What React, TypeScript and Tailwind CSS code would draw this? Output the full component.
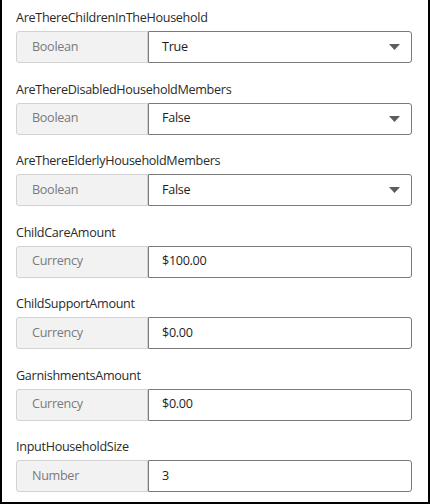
import React from 'react';

interface Field {
    label: string;
    type: string;
    value: string;
    select?: boolean;
}

const fields: Field[] = [
    { label: 'AreThereChildrenInTheHousehold', type: 'Boolean', value: 'True', select: true },
    { label: 'AreThereDisabledHouseholdMembers', type: 'Boolean', value: 'False', select: true },
    { label: 'AreThereElderlyHouseholdMembers', type: 'Boolean', value: 'False', select: true },
    { label: 'ChildCareAmount', type: 'Currency', value: '$100.00' },
    { label: 'ChildSupportAmount', type: 'Currency', value: '$0.00' },
    { label: 'GarnishmentsAmount', type: 'Currency', value: '$0.00' },
    { label: 'InputHouseholdSize', type: 'Number', value: '3' },
];

export default function App() {
    return (
        <div
            className="w-[430px] h-[504px] bg-white border-x-2 border-b-2 border-black pl-[14px] pr-[16px] pt-[9px] overflow-hidden"
            style={{ fontFamily: '"Open Sans", "Noto Sans", sans-serif' }}
        >
            <div className="flex flex-col gap-[17.5px]">
                {fields.map((f) => (
                    <div key={f.label}>
                        <div className="h-[18px] leading-[18px] text-[12.6px] text-[#2a2a2a] tracking-[-0.3px] mb-[4px]">{f.label}</div>
                        <div className="flex h-[32px]">
                            <div className="w-[132px] shrink-0 flex items-center pl-[15px] bg-[#f2f2f2] border border-[#d2d2d2] rounded-l-[3px] text-[12.6px] tracking-[-0.3px] text-[#7a7a7a]">
                                {f.type}
                            </div>
                            <div className="flex-1 flex items-center justify-between pl-[13px] pr-[11px] bg-white border border-[#7a7a7a] rounded-r-[3px] text-[12.6px] tracking-[-0.3px] text-[#1e1e1e]">
                                <span>{f.value}</span>
                                {f.select && (
                                    <svg width="11" height="6" viewBox="0 0 11 6">
                                        <path d="M0 0 L11 0 L5.5 6 Z" fill="#5c5c5c" />
                                    </svg>
                                )}
                            </div>
                        </div>
                    </div>
                ))}
            </div>
        </div>
    );
}
